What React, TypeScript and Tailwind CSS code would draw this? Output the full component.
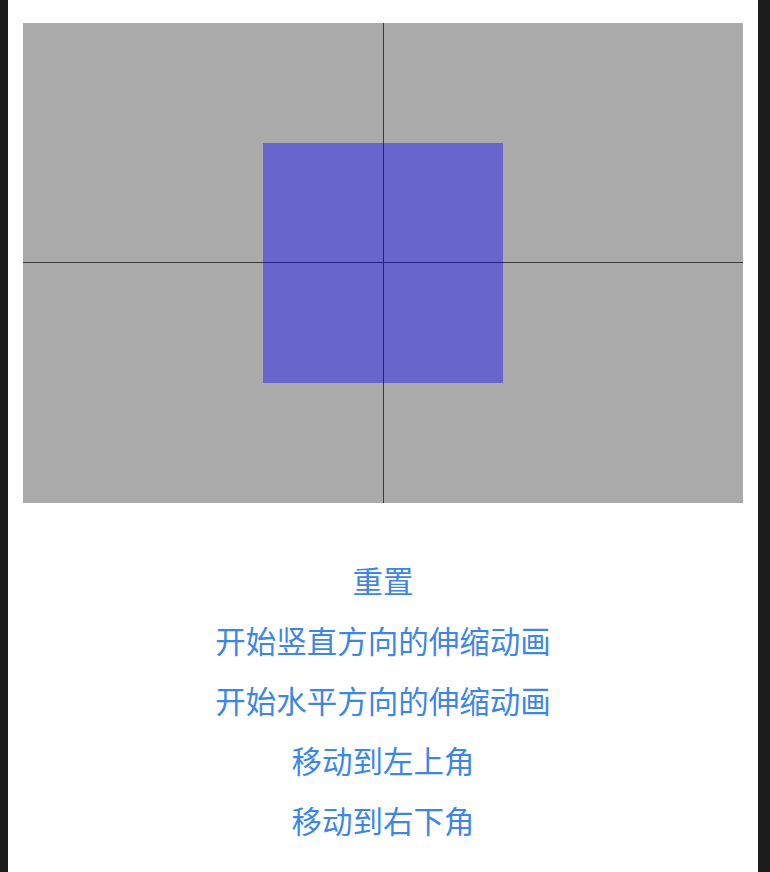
export default function App() {
  const actions = ['重置', '开始竖直方向的伸缩动画', '开始水平方向的伸缩动画', '移动到左上角', '移动到右下角'];

  return (
    <div className="flex h-[872px] w-[770px] bg-[#1c1c1c]">
      <div className="ml-[8px] flex h-full w-[750px] flex-col items-center bg-white pt-[23px]">
        {/* stage */}
        <div className="relative h-[480px] w-[720px] bg-[#aaaaaa]">
          <div className="absolute left-[359.5px] top-0 h-full w-px bg-[#3a3a3a]" />
          <div className="absolute left-0 top-[239px] h-px w-full bg-[#3a3a3a]" />
          <div className="absolute left-[240px] top-[120px] h-[240px] w-[240px] bg-[rgba(0,0,255,0.4)]" />
        </div>

        <div className="mt-[47px] flex flex-col items-center">
          {actions.map((label) => (
            <button
              key={label}
              className="h-[60px] text-[30.5px] leading-[60px] text-[#3d86e4]"
              style={{ fontFamily: '"Noto Sans CJK SC", "Noto Sans", sans-serif' }}
            >
              {label}
            </button>
          ))}
        </div>
      </div>
    </div>
  );
}
